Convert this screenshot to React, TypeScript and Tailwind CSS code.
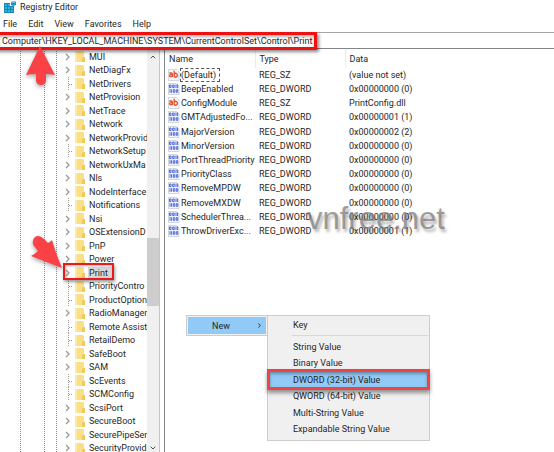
import { ChevronDown, ChevronRight, ChevronUp } from "lucide-react";

type TreeItem = { name: string; leaf?: boolean };
type RegValue = { name: string; type: string; data: string };

const keys: TreeItem[] = [
  { name: "MUI" },
  { name: "NetDiagFx" },
  { name: "NetDrivers", leaf: true },
  { name: "NetProvision" },
  { name: "NetTrace" },
  { name: "Network" },
  { name: "NetworkProvid" },
  { name: "NetworkSetup", leaf: true },
  { name: "NetworkUxMa" },
  { name: "Nls" },
  { name: "NodeInterface" },
  { name: "Notifications", leaf: true },
  { name: "Nsi" },
  { name: "OSExtensionD" },
  { name: "PnP" },
  { name: "Power" },
  { name: "Print" },
  { name: "PriorityContro", leaf: true },
  { name: "ProductOption", leaf: true },
  { name: "RadioManager" },
  { name: "Remote Assist", leaf: true },
  { name: "RetailDemo", leaf: true },
  { name: "SafeBoot" },
  { name: "SAM" },
  { name: "ScEvents", leaf: true },
  { name: "SCMConfig", leaf: true },
  { name: "ScsiPort" },
  { name: "SecureBoot" },
  { name: "SecurePipeSer" },
  { name: "SecurityProvid" },
];

const values: RegValue[] = [
  { name: "(Default)", type: "REG_SZ", data: "(value not set)" },
  { name: "BeepEnabled", type: "REG_DWORD", data: "0x00000000 (0)" },
  { name: "ConfigModule", type: "REG_SZ", data: "PrintConfig.dll" },
  { name: "GMTAdjustedFo...", type: "REG_DWORD", data: "0x00000001 (1)" },
  { name: "MajorVersion", type: "REG_DWORD", data: "0x00000002 (2)" },
  { name: "MinorVersion", type: "REG_DWORD", data: "0x00000000 (0)" },
  { name: "PortThreadPriority", type: "REG_DWORD", data: "0x00000000 (0)" },
  { name: "PriorityClass", type: "REG_DWORD", data: "0x00000000 (0)" },
  { name: "RemoveMPDW", type: "REG_DWORD", data: "0x00000000 (0)" },
  { name: "RemoveMXDW", type: "REG_DWORD", data: "0x00000000 (0)" },
  { name: "SchedulerThrea...", type: "REG_DWORD", data: "0x00000000 (0)" },
  { name: "ThrowDriverExc...", type: "REG_DWORD", data: "0x00000001 (1)" },
];

const newItems = [
  "String Value",
  "Binary Value",
  "DWORD (32-bit) Value",
  "QWORD (64-bit) Value",
  "Multi-String Value",
  "Expandable String Value",
];

function RegeditIcon() {
  return (
    <svg width="12" height="12" viewBox="0 0 12 12" aria-hidden="true">
      <path d="M0 2h6v3h4v7H0z" fill="#1687b8" />
      <path d="M1 3h2v2H1zM4 3h2v2H4zM1 6h2v2H1zM4 6h2v2H4zM7 6h2v2H7zM1 9h2v2H1zM4 9h2v2H4zM7 9h2v2H7z" fill="#36b0dc" />
      <path d="M7 1l3-1 2 1v3l-3 1-2-1z" fill="#1f93c4" />
      <path d="M7 1l2 1 3-1-2-1z" fill="#7fd3ee" />
    </svg>
  );
}

function FolderIcon() {
  return (
    <svg width="11" height="13" viewBox="0 0 11 13" className="shrink-0" aria-hidden="true">
      <path d="M0 1h8l1 1v5h1v5H0z" fill="#fbdf86" />
      <path d="M0 1h2v11H0z" fill="#fde9a3" />
      <path d="M8 7h2v5H7V9z" fill="#f2c957" />
    </svg>
  );
}

function Branch({ leaf }: { leaf?: boolean }) {
  return (
    <svg width="18" height="14" viewBox="0 0 18 14" className="shrink-0" aria-hidden="true">
      {leaf ? (
        <path d="M11.5 0v14M12 7.5h4" stroke="#9a9a9a" strokeDasharray="1 1" fill="none" />
      ) : (
        <path d="M9 4l3 3-3 3" stroke="#9a9a9a" strokeWidth="1.3" fill="none" />
      )}
    </svg>
  );
}

function ValueIcon({ text }: { text: boolean }) {
  return (
    <svg width="12" height="12" viewBox="0 0 12 12" className="shrink-0" aria-hidden="true">
      <path d="M.5.5h8l2.500 2.500v8.500H.5z" fill="#f4f5f8" stroke="#c2c6d0" strokeWidth=".7" />
      {text ? (
        <g stroke="#e2502c" strokeWidth="1.3" fill="none">
          <path d="M1.400 4h1.800c.8 0 1.200.4 1.200 1.200V8M4.400 5.600H2.800c-1.600 0-1.600 2.200 0 2.200 1 0 1.600-.4 1.600-1.200" />
          <path d="M6.200 1.800V8.200M6.200 5c.9-1.200 3.200-1 3.200 1.300S7.100 8.600 6.200 7.500" />
        </g>
      ) : (
        <g stroke="#3a59e0" strokeWidth=".9" fill="none">
          <path d="M1.500 2h1.500v2.600H1.500zM4.700 2h1.500v2.600H4.700zM8 1.500V5M9.600 1.500V5" />
          <path d="M2 6.200V9.800M3.600 6.200V9.800M5.300 6.700h1.500v2.600H5.300zM8.300 6.700h1.500v2.600H8.300z" />
        </g>
      )}
    </svg>
  );
}

function Tree() {
  return (
    <nav aria-label="Registry keys" className="flex w-40 shrink-0 overflow-hidden border-r border-[#c4c6cc]">
      <div className="w-5 shrink-0" />
      <div className="w-6 shrink-0 border-l border-dotted border-[#8c8c8c]" />
      <div className="w-3 shrink-0 border-l border-dotted border-[#8c8c8c]" />
      <ul className="min-w-0 flex-1 overflow-hidden border-l border-dotted border-[#8c8c8c] pt-px">
        {keys.map((key) => (
          <li key={key.name} className="flex items-center odd:h-[13px] even:h-[14px]">
            <Branch leaf={key.leaf} />
            <FolderIcon />
            <button
              className={`ml-[2px] px-px leading-3 whitespace-nowrap ${key.name === "Print" ? "bg-[#d9d9d9] pr-1" : ""}`}
            >
              {key.name}
            </button>
          </li>
        ))}
      </ul>
      <div className="flex w-3 shrink-0 flex-col items-center bg-[#f0f0f0] text-[#505050]">
        <ChevronUp size={8} strokeWidth={3} className="mt-1 shrink-0" />
        <div className="h-[177px] shrink-0" />
        <div className="h-[68px] w-full shrink-0 bg-[#cdcdcd]" />
        <ChevronDown size={8} strokeWidth={3} className="mt-auto shrink-0" />
      </div>
    </nav>
  );
}

function ValueList() {
  return (
    <main className="ml-1 min-w-0 flex-1 border-l border-[#82858c]">
      <table className="w-full table-fixed border-collapse text-left">
        <thead>
          <tr className="h-[19px]">
            <th className="w-[90px] border-r border-[#ececec] pl-1 font-normal">Name</th>
            <th className="w-[90px] border-r border-[#ececec] pl-1 font-normal">Type</th>
            <th className="pl-1 font-normal">Data</th>
          </tr>
        </thead>
        <tbody>
          {values.map((v) => (
            <tr key={v.name} className="h-[14px] whitespace-nowrap nth-[5n]:h-[15px]">
              <td className="p-0 pl-[3px]">
                <div className="flex h-[14px] items-center">
                  <ValueIcon text={v.type === "REG_SZ"} />
                  <span
                    className={
                      v.name === "(Default)"
                        ? "border border-dashed border-[#555] pr-[3px] leading-3"
                        : "pl-px leading-3"
                    }
                  >
                    {v.name}
                  </span>
                </div>
              </td>
              <td className="p-0 pl-1 leading-3">{v.type}</td>
              <td className="p-0 pl-1 leading-3">{v.data}</td>
            </tr>
          ))}
        </tbody>
      </table>
    </main>
  );
}

function ContextMenu() {
  return (
    <div className="absolute top-[315px] left-[186px] flex items-start">
      <div className="w-[81px] border border-r-0 border-[#cccccc] bg-[#f0f0f0] p-px">
        <button className="flex h-[17px] w-full items-center bg-[#91c9f7] pr-[3px] pl-6">
          New
          <ChevronRight size={7} strokeWidth={3} className="ml-auto" />
        </button>
      </div>
      <div className="w-[163px] border border-[#cccccc] bg-[#f0f0f0] pt-px pb-[3px]">
        <button className="block h-4 w-full pl-[25px] text-left">Key</button>
        <hr className="mt-[2px] mr-px mb-[2px] ml-6 border-[#d8d8d8]" />
        {newItems.map((item) => (
          <button
            key={item}
            className={`block w-full pl-[25px] text-left odd:h-[17px] even:h-4 ${
              item.startsWith("DWORD") ? "relative bg-[#91c9f7]" : ""
            }`}
          >
            {item}
            {item.startsWith("DWORD") && (
              <span className="absolute -inset-x-px -inset-y-[2px] border-3 border-[#f04343] shadow-[0_3px_4px_rgba(0,0,0,0.4),inset_0_2px_3px_rgba(0,0,0,0.3)]" />
            )}
          </button>
        ))}
      </div>
    </div>
  );
}

function Annotations() {
  return (
    <div className="pointer-events-none absolute inset-0 overflow-hidden">
      <p className="absolute top-[201px] left-[307px] font-['Liberation_Sans',sans-serif] text-[31px] leading-9 text-[#808080]/75 [text-shadow:2px_3px_3px_rgba(0,0,0,0.3)]">
        vnfree.net
      </p>
      <div className="absolute top-8 -left-1 h-[18px] w-[321px] border-3 border-[#ee1111] shadow-[2px_2px_3px_rgba(0,0,0,0.45),inset_0_2px_3px_rgba(0,0,0,0.3)]" />
      <div className="absolute top-[263px] left-[63px] h-[17px] w-[51px] border-2 border-[#e81c1c] shadow-[1px_2px_3px_rgba(0,0,0,0.4),inset_1px_1px_3px_rgba(0,0,0,0.3)]" />
      <svg width="80" height="300" viewBox="0 0 80 300" className="absolute top-0 left-0 drop-shadow-[0_2px_2px_rgba(0,0,0,0.35)]">
        <g fill="#fa4145">
          <path d="M40 46L55 75Q50 74 46 74V81Q45 85 41 85Q37 85 36 81V74Q31 74 26 75Z" />
          <path d="M62 268L31 256Q35 254 38 251L34 246Q31 241 35 237Q39 234 44 239L48 243Q50 242 52 240Q56 254 62 268Z" />
        </g>
      </svg>
    </div>
  );
}

export default function App() {
  return (
    <div className="relative flex h-screen flex-col overflow-hidden bg-white font-[Roboto,sans-serif] text-[9px] leading-3 text-[#262626]">
      <header className="flex h-[13px] shrink-0 items-center gap-1 pl-1">
        <RegeditIcon />
        <h1>Registry Editor</h1>
      </header>
      <div className="flex h-[19px] shrink-0 items-center gap-[11px] pt-[3px] pl-[3px]">
        <button>File</button>
        <button>Edit</button>
        <button>View</button>
        <button>Favorites</button>
        <button>Help</button>
      </div>
      <input
        aria-label="Address"
        className="h-[17px] w-full shrink-0 border-y border-t-[#a5a5a5] border-b-[#82858c] pl-[2px] outline-none"
        defaultValue="Computer\HKEY_LOCAL_MACHINE\SYSTEM\CurrentControlSet\Control\Print"
      />
      <div className="flex min-h-0 flex-1">
        <Tree />
        <ValueList />
      </div>
      <ContextMenu />
      <Annotations />
    </div>
  );
}
